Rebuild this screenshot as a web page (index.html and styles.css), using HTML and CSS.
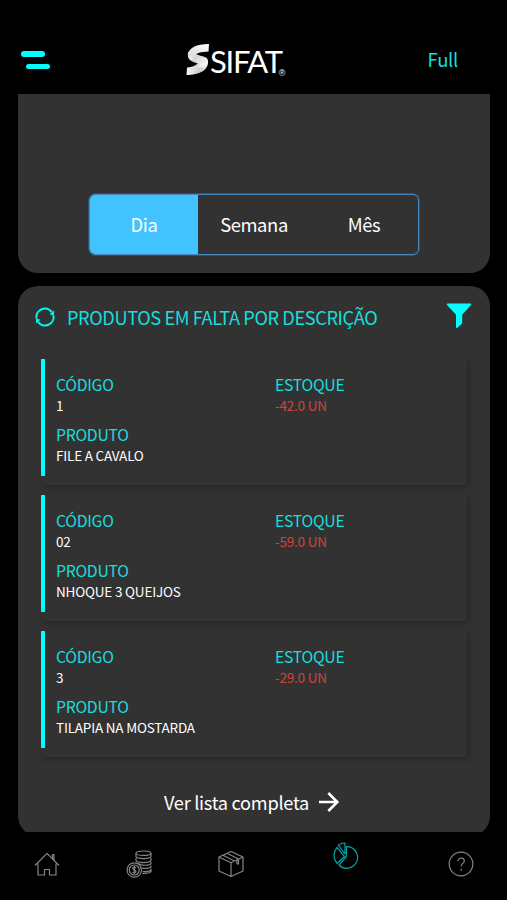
FILE: index.html
```html
<!DOCTYPE html>
<html lang="pt-BR">
<head>
<meta charset="utf-8">
<title>SIFAT</title>
<link rel="stylesheet" href="styles.css">
</head>
<body>
<div class="app">
  <header class="topbar">
    <div class="menu"><span class="menu-line"></span><span class="menu-line menu-line-low"></span></div>
    <div class="brand">
      <svg class="brand-mark" width="24" height="33" viewBox="0 0 24 33">
        <defs>
          <linearGradient id="top" x1="0" y1="1" x2="1" y2="0"><stop offset="0" stop-color="#d8d8d8"/><stop offset="1" stop-color="#fff"/></linearGradient>
          <linearGradient id="mid" x1="0" y1="0" x2="1" y2="0.6"><stop offset="0" stop-color="#fff"/><stop offset="0.45" stop-color="#d4d4d4"/><stop offset="1" stop-color="#f4f4f4"/></linearGradient>
          <linearGradient id="low" x1="0" y1="0" x2="1" y2="0"><stop offset="0" stop-color="#f6f6f6"/><stop offset="0.6" stop-color="#ccc"/><stop offset="1" stop-color="#eee"/></linearGradient>
        </defs>
        <path fill="url(#low)" d="M1 24.5C8 24 11 22 13 18L22 18C23 27 13 32 .5 32Z"/>
        <path fill="url(#mid)" d="M2 9C1 17 5 18.500 12 20.500C14 21.500 12 23 10 24.500C17 25 22 23 22 18C22 12 12 14 9 10Z"/>
        <path fill="url(#top)" d="M23 1C10 1 3 5 2 11C3 13.500 5 14 8 13C10 10 15 9 22.500 8.500Z"/>
      </svg>
      <span class="brand-name">SIFAT</span><span class="brand-reg">®</span>
    </div>
    <span class="plan">Full</span>
  </header>

  <main class="content">
    <section class="panel panel-period">
      <div class="tabs">
        <span class="tab tab-active">Dia</span>
        <span class="tab">Semana</span>
        <span class="tab">Mês</span>
      </div>
    </section>

    <section class="panel panel-products">
      <div class="panel-head">
        <svg class="refresh" width="20" height="20" viewBox="0 0 20 20" fill="none" stroke="#00f5f5" stroke-width="2.1">
          <path d="M1.6 11.5A8.4 8.4 0 0 1 16.8 5.2M18.400 8.500A8.4 8.4 0 0 1 3.200 14.800"/>
          <path fill="#00f5f5" stroke="none" d="M19 3.600V8.800L14.600 7.200ZM1 16.400V11.200L5.400 12.800Z"/>
        </svg>
        <h1 class="panel-title">PRODUTOS EM FALTA POR DESCRIÇÃO</h1>
        <svg class="filter" width="26" height="26" viewBox="0 0 26 26" fill="#0ff"><path d="M1.5 .6H24.500Q25.600 .8 25 2L16.200 11.800V20.200L11.500 24.800Q10 25.500 10 24V11.800L1 2Q.4 .8 1.5 .6Z"/></svg>
      </div>
      <div class="list">
        <article class="card">
          <div class="field"><div class="label">CÓDIGO</div><div class="value">1</div></div>
          <div class="field"><div class="label">ESTOQUE</div><div class="value value-low">-42.0 UN</div></div>
          <div class="field"><div class="label">PRODUTO</div><div class="value">FILE A CAVALO</div></div>
        </article>
        <article class="card">
          <div class="field"><div class="label">CÓDIGO</div><div class="value">02</div></div>
          <div class="field"><div class="label">ESTOQUE</div><div class="value value-low">-59.0 UN</div></div>
          <div class="field"><div class="label">PRODUTO</div><div class="value">NHOQUE 3 QUEIJOS</div></div>
        </article>
        <article class="card">
          <div class="field"><div class="label">CÓDIGO</div><div class="value">3</div></div>
          <div class="field"><div class="label">ESTOQUE</div><div class="value value-low">-29.0 UN</div></div>
          <div class="field"><div class="label">PRODUTO</div><div class="value">TILAPIA NA MOSTARDA</div></div>
        </article>
      </div>
      <div class="more">
        <span>Ver lista completa</span>
        <svg width="22" height="20" viewBox="0 0 22 20" fill="none" stroke="#fff" stroke-width="2.6"><path d="M1 10H19.300M10.300 1L19.300 10L10.300 19"/></svg>
      </div>
    </section>
  </main>

  <nav class="bottom">
    <svg class="nav-icon" width="26" height="26" viewBox="0 0 26 26"><path d="M1 14.500L13 2.300L25 14.500M4 12.500V24H10.500V18.500H15.500V24H22V12.500M18.500 7.500V3.500H20V9"/></svg>
    <svg class="nav-icon" width="26" height="28" viewBox="0 0 26 28">
      <ellipse cx="17.5" cy="3.2" rx="7.5" ry="2.2"/>
      <path d="M10 3.2V6.500C11 9.200 24 9.200 25 6.500V3.200M10 8V10.500C11 13.200 24 13.200 25 10.500V8M12 13.500C15 15.800 24 15.800 25 13.500V12M16 18.300C20 18.600 24 18 25 16.800V15.500M16.500 21.500C20 21.800 24 21 25 19.800V18.500M25 19.500V21.500C24 23 20 23.500 16.500 23.300"/>
      <circle cx="8.300" cy="20" r="7.200"/><circle cx="8.300" cy="20" r="5"/>
      <path d="M10 18C9 16.700 6.700 17 6.800 18.500C7 20.200 10 19.500 10 21.500C9.800 23.200 7.300 23 6.500 22M8.300 16V24"/>
    </svg>
    <svg class="nav-icon" width="26" height="28" viewBox="0 0 26 28"><path d="M13 1.500L25 7V21L13 26.500L1 21V7ZM1 7L13 12.800L25 7M13 12.800V26.500M5 5.300L16.500 11M9 3.300L20.500 9V14.200L18.800 13.500V9.900"/></svg>
    <svg class="nav-icon nav-icon-active" width="26" height="28" viewBox="0 0 26 28"><path d="M13.500 14.500V4.700A10.800 10.800 0 1 1 6 23ZM12 12L5.300 3.200Q8.500 .8 12 1ZM4 5.300L11.500 14.500L4 21.500Q-2 13 4 5.300Z"/></svg>
    <svg class="nav-icon" width="26" height="26" viewBox="0 0 26 26"><circle cx="13" cy="13" r="11.8"/><path d="M10 10.200C10 6 16.300 6.300 16.300 10C16.300 12.500 13.200 12.400 13.200 15.500M13.200 17.800V19.700"/></svg>
  </nav>
</div>
</body>
</html>
```
FILE: styles.css
```css
* { box-sizing: border-box; }

body {
  margin: 0;
  background: #000;
  color: #fff;
  font-family: "Noto Sans CJK SC", "Noto Sans", sans-serif;
}

.app {
  height: 900px;
  display: flex;
  flex-direction: column;
  overflow: hidden;
}

.topbar {
  flex: none;
  height: 94px;
  padding: 26px 49px 0 21px;
  display: grid;
  grid-template-columns: 165px auto 1fr;
  align-items: center;
}

.menu { display: flex; flex-direction: column; gap: 7px; }
.menu-line { width: 24px; height: 5.5px; border-radius: 3px; background: #0ff; }
.menu-line-low { margin-left: 5px; }

.brand { display: flex; align-items: center; }
.brand-mark { margin-top: -1px; }
.brand-name {
  font-family: Lato, sans-serif;
  font-size: 31px;
  line-height: 34px;
  letter-spacing: -1.3px;
  padding-top: 2px;
}
.brand-reg {
  align-self: flex-end;
  margin: 0 0 -1px -3px;
  font-family: "Liberation Sans", sans-serif;
  font-size: 9px;
  line-height: 12px;
}

.plan {
  justify-self: end;
  padding-bottom: 2px;
  color: #18dede;
  font-size: 18.5px;
  letter-spacing: -0.3px;
  line-height: 26px;
}

.content {
  height: 738px;
  flex: none;
  padding: 0 17px 0 18px;
  overflow: hidden;
}

.panel { background: #323232; }
.panel-period {
  height: 179px;
  border-radius: 0 0 20px 20px;
  padding: 100px 71px 0;
}

.tabs {
  height: 61px;
  display: grid;
  grid-template-columns: 108px 1fr 108px;
  border: 1.5px solid #4688bd;
  border-radius: 6px;
  box-shadow: 0 0 0 0.5px #3c6c92;
  overflow: hidden;
}
.tab { font-size: 18.4px; letter-spacing: -0.4px; line-height: 59px; text-align: center; }
.tab-active { background: #42c3ff; }

.panel-products {
  height: 550px;
  margin-top: 13px;
  padding: 16px 18px 0 17px;
  border-radius: 20px;
}
.panel-head { display: flex; align-items: center; height: 30px; }
.filter { margin-top: -2px; }
.panel-title {
  flex: 1;
  margin: 0 0 0 12px;
  color: #16dede;
  font-size: 18.2px;
  letter-spacing: -0.4px;
  font-weight: 400;
  line-height: 30px;
  white-space: nowrap;
}

.list { display: grid; gap: 10px; margin: 27px 5px 0 6px; }
.card {
  height: 126px;
  padding: 14px 0 0 11px;
  display: grid;
  grid-template-columns: 219px 1fr;
  grid-auto-rows: 50px;
  border-left: 4px solid;
  border-image: linear-gradient(#0ff 116px, transparent 116px) 1;
  box-shadow: 2px 2px 5px rgba(0, 0, 0, 0.25);
}
.label { color: #16dede; font-size: 15.8px; letter-spacing: -0.3px; line-height: 23px; }
.value { font-size: 13.5px; letter-spacing: -0.2px; line-height: 18px; white-space: nowrap; }
.value-low { color: #d04438; }

.more {
  display: flex;
  align-items: center;
  justify-content: center;
  gap: 9px;
  margin: 30px 3px 0 0;
  font-size: 18.2px;
  letter-spacing: -0.28px;
  line-height: 30px;
}

.bottom {
  flex: 1;
  display: grid;
  grid-template-columns: 92px 92px 92px 138px 92px;
  align-items: center;
  justify-items: center;
  padding: 0 0 4px 1px;
}
.nav-icon { fill: none; stroke: #858585; stroke-width: 1.2; stroke-linejoin: round; }
.nav-icon-active { stroke: #05a3a5; margin-bottom: 17px; }
```
